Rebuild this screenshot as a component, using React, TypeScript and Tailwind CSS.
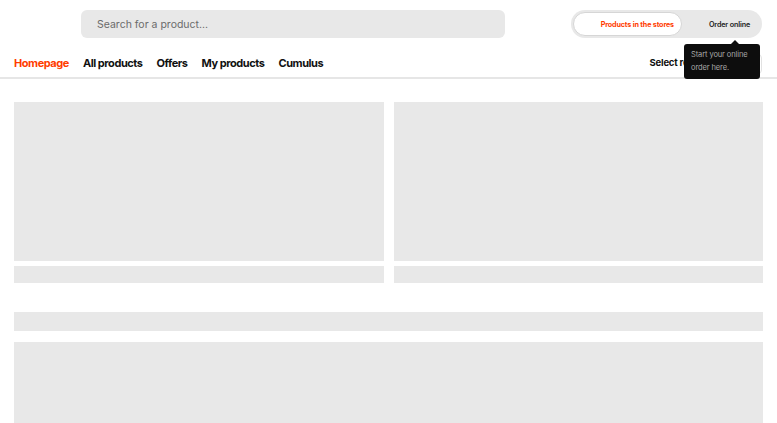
import React from 'react';

const navItems = ['Homepage', 'All products', 'Offers', 'My products', 'Cumulus'];

const App: React.FC = () => {
  return (
    <div className="min-h-[423px] w-[777px] overflow-hidden bg-white" style={{ fontFamily: 'Inter, "Liberation Sans", sans-serif' }}>
      {/* top bar */}
      <header className="flex h-[48px] items-start pt-[10px]">
        <div className="w-[81px]" />
        <div className="flex h-[28px] w-[424px] items-center rounded-[6px] bg-[#e8e8e8] pl-[16px] pt-[1px] text-[10.5px] text-[#6b6b6b]">
          Search for a product...
        </div>
        <div className="flex-1" />
        <div className="relative mr-[15px] flex h-[28px] w-[191px] items-center rounded-full bg-[#e8e8e8] p-[2px]">
          <div className="flex h-[24px] w-[109px] items-center justify-end rounded-full border border-[#d6d6d6] bg-white pr-[7px] pt-[2px] text-[7.2px] font-bold tracking-[-0.15px] text-[#ff3c00]">
            Products in the stores
          </div>
          <div className="flex flex-1 items-center justify-end pr-[10px] pt-[2px] text-[7.2px] font-semibold tracking-[-0.15px] text-[#222]">
            Order online
          </div>
          {/* tooltip */}
          <div className="absolute left-[113px] top-[34px] z-10 w-[76px] rounded-[3px] bg-[#0d0d0d] px-[7px] pb-[5px] pt-[5px] text-[7.5px] leading-[12.5px] tracking-[-0.1px] text-[#a8a8a8]">
            <div className="absolute -top-[4px] left-[47px] h-0 w-0 border-x-[4px] border-b-[4px] border-x-transparent border-b-[#0d0d0d]" />
            Start your online
            <br />
            order here.
          </div>
        </div>
      </header>

      {/* nav */}
      <nav className="flex h-[31px] items-center border-b-[2px] border-[#e6e6e6] pt-[2px]">
        <ul className="flex items-center gap-[14px] pl-[14px]">
          {navItems.map((item, i) => (
            <li
              key={item}
              className={`text-[11px] font-bold tracking-[-0.45px] ${i === 0 ? 'text-[#ff3c00]' : 'text-[#111]'}`}
            >
              {item}
            </li>
          ))}
        </ul>
        <div className="flex-1" />
        <div className="mr-[15px] flex items-center gap-[4px]">
          <span className="text-[9.5px] font-bold tracking-[-0.2px] text-[#111]">Select region</span>
          <div className="h-[20px] w-[50px] rounded-[4px] border border-[#e2e2e2]" />
        </div>
      </nav>

      {/* content skeleton */}
      <main className="px-[14px] pt-[23px]">
        <div className="grid grid-cols-2 gap-[10px]">
          {[0, 1].map((k) => (
            <div key={k} className="flex flex-col gap-[5px]">
              <div className="h-[159px] bg-[#e8e8e8]" />
              <div className="h-[17px] bg-[#e8e8e8]" />
            </div>
          ))}
        </div>
        <div className="mt-[29px] h-[19px] bg-[#e8e8e8]" />
        <div className="mt-[11px] h-[90px] bg-[#e8e8e8]" />
      </main>
    </div>
  );
};

export default App;
